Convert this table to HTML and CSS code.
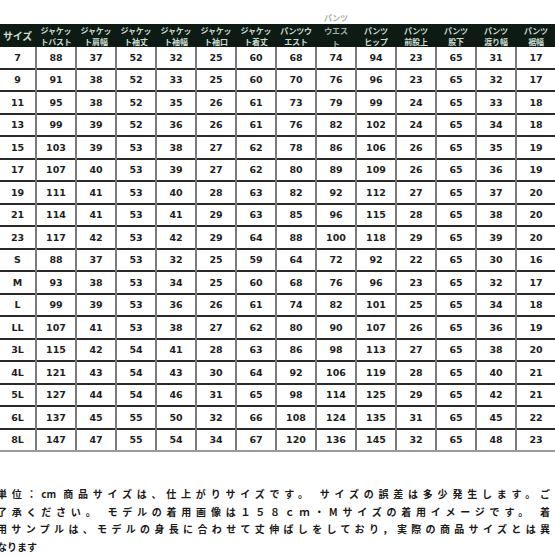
FILE: index.html
```html
<!DOCTYPE html>
<html lang="ja">
<head>
<meta charset="utf-8">
<link rel="stylesheet" href="styles.css">
</head>
<body>
<div class="page">
  <table class="size-table">
    <colgroup>
      <col class="c-first"><col><col><col><col><col><col><col><col><col><col><col><col><col>
    </colgroup>
    <thead>
      <tr>
        <th class="single">サイズ</th>
        <th>ジャケッ<br>トバスト</th>
        <th>ジャケッ<br>ト肩幅</th>
        <th>ジャケッ<br>ト袖丈</th>
        <th>ジャケッ<br>ト袖幅</th>
        <th>ジャケッ<br>ト袖口</th>
        <th>ジャケッ<br>ト着丈</th>
        <th>パンツウ<br>エスト</th>
        <th class="triple"><span class="tri">パンツ<br>ウエス<br>ト</span></th>
        <th>パンツ<br>ヒップ</th>
        <th>パンツ<br>前股上</th>
        <th>パンツ<br>股下</th>
        <th>パンツ<br>渡り幅</th>
        <th>パンツ<br>裾幅</th>
      </tr>
    </thead>
    <tbody>
      <tr><td>7</td><td>88</td><td>37</td><td>52</td><td>32</td><td>25</td><td>60</td><td>68</td><td>74</td><td>94</td><td>23</td><td>65</td><td>31</td><td>17</td></tr>
      <tr><td>9</td><td>91</td><td>38</td><td>52</td><td>33</td><td>25</td><td>60</td><td>70</td><td>76</td><td>96</td><td>23</td><td>65</td><td>32</td><td>17</td></tr>
      <tr><td>11</td><td>95</td><td>38</td><td>52</td><td>35</td><td>26</td><td>61</td><td>73</td><td>79</td><td>99</td><td>24</td><td>65</td><td>33</td><td>18</td></tr>
      <tr><td>13</td><td>99</td><td>39</td><td>52</td><td>36</td><td>26</td><td>61</td><td>76</td><td>82</td><td>102</td><td>24</td><td>65</td><td>34</td><td>18</td></tr>
      <tr><td>15</td><td>103</td><td>39</td><td>53</td><td>38</td><td>27</td><td>62</td><td>78</td><td>86</td><td>106</td><td>26</td><td>65</td><td>35</td><td>19</td></tr>
      <tr><td>17</td><td>107</td><td>40</td><td>53</td><td>39</td><td>27</td><td>62</td><td>80</td><td>89</td><td>109</td><td>26</td><td>65</td><td>36</td><td>19</td></tr>
      <tr><td>19</td><td>111</td><td>41</td><td>53</td><td>40</td><td>28</td><td>63</td><td>82</td><td>92</td><td>112</td><td>27</td><td>65</td><td>37</td><td>20</td></tr>
      <tr><td>21</td><td>114</td><td>41</td><td>53</td><td>41</td><td>29</td><td>63</td><td>85</td><td>96</td><td>115</td><td>28</td><td>65</td><td>38</td><td>20</td></tr>
      <tr><td>23</td><td>117</td><td>42</td><td>53</td><td>42</td><td>29</td><td>64</td><td>88</td><td>100</td><td>118</td><td>29</td><td>65</td><td>39</td><td>20</td></tr>
      <tr><td>S</td><td>88</td><td>37</td><td>53</td><td>32</td><td>25</td><td>59</td><td>64</td><td>72</td><td>92</td><td>22</td><td>65</td><td>30</td><td>16</td></tr>
      <tr><td>M</td><td>93</td><td>38</td><td>53</td><td>34</td><td>25</td><td>60</td><td>68</td><td>76</td><td>96</td><td>23</td><td>65</td><td>32</td><td>17</td></tr>
      <tr><td>L</td><td>99</td><td>39</td><td>53</td><td>36</td><td>26</td><td>61</td><td>74</td><td>82</td><td>101</td><td>25</td><td>65</td><td>34</td><td>18</td></tr>
      <tr><td>LL</td><td>107</td><td>41</td><td>53</td><td>38</td><td>27</td><td>62</td><td>80</td><td>90</td><td>107</td><td>26</td><td>65</td><td>36</td><td>19</td></tr>
      <tr><td>3L</td><td>115</td><td>42</td><td>54</td><td>41</td><td>28</td><td>63</td><td>86</td><td>98</td><td>113</td><td>27</td><td>65</td><td>38</td><td>20</td></tr>
      <tr><td>4L</td><td>121</td><td>43</td><td>54</td><td>43</td><td>30</td><td>64</td><td>92</td><td>106</td><td>119</td><td>28</td><td>65</td><td>40</td><td>21</td></tr>
      <tr><td>5L</td><td>127</td><td>44</td><td>54</td><td>46</td><td>31</td><td>65</td><td>98</td><td>114</td><td>125</td><td>29</td><td>65</td><td>42</td><td>21</td></tr>
      <tr><td>6L</td><td>137</td><td>45</td><td>55</td><td>50</td><td>32</td><td>66</td><td>108</td><td>124</td><td>135</td><td>31</td><td>65</td><td>45</td><td>22</td></tr>
      <tr><td>8L</td><td>147</td><td>47</td><td>55</td><td>54</td><td>34</td><td>67</td><td>120</td><td>136</td><td>145</td><td>32</td><td>65</td><td>48</td><td>23</td></tr>
    </tbody>
  </table>
  <div class="note">
    <div class="line just">単位：cm 商品サイズは、仕上がりサイズです。 サイズの誤差は多少発生します。ご</div>
    <div class="line just">了承ください。 モデルの着用画像は１５８ｃｍ・Mサイズの着用イメージです。 着</div>
    <div class="line just">用サンプルは、モデルの身長に合わせて丈伸ばしをしており，実際の商品サイズとは異</div>
    <div class="line">なります</div>
  </div>
</div>
</body>
</html>
```

FILE: styles.css
```css
html, body {
  margin: 0;
  padding: 0;
  background: #ffffff;
  overflow: hidden;
}
.page {
  width: 555px;
  height: 555px;
  overflow: hidden;
  padding-top: 24px;
  box-sizing: border-box;
}
.size-table {
  width: 556px;
  table-layout: fixed;
  border-collapse: collapse;
  font-family: "DejaVu Sans", "Noto Sans CJK JP", sans-serif;
}
.size-table col { width: 40px; }
.size-table col.c-first { width: 36px; }
.size-table th {
  background: #0e1a14;
  color: #c9dccf;
  font-family: "Noto Sans CJK JP", sans-serif;
  font-weight: 700;
  font-size: 8px;
  line-height: 11px;
  height: 23px;
  padding: 0;
  text-align: center;
  vertical-align: middle;
  white-space: nowrap;
  overflow: visible;
  border: none;
  letter-spacing: -0.2px;
}
.size-table th.single {
  font-size: 10px;
  text-align: left;
  padding-left: 3px;
}
.size-table th.triple {
  position: relative;
}
.tri {
  position: absolute;
  left: 0;
  right: 0;
  top: -13px;
  line-height: 13px;
  height: 36px;
  overflow: hidden;
  color: #9fb0a5;
}
.size-table td {
  height: 20.5px;
  padding: 0;
  text-align: center;
  vertical-align: middle;
  font-size: 9.5px;
  font-weight: 700;
  color: #1e1e1e;
  border-top: 2px solid #2a2a2a;
  border-left: 2px solid #7a7a7a;
  border-right: 2px solid #7a7a7a;
}
.size-table tbody tr:first-child td { border-top: none; }
.size-table tbody tr:last-child td { border-bottom: 2px solid #9a9a9a; }
.size-table td:first-child {
  border-left: none;
  text-align: center;
}
.note {
  margin-top: 33px;
  margin-left: -3px;
  width: 553px;
  font-family: "Noto Sans CJK JP", sans-serif;
  font-weight: 700;
  font-size: 10px;
  line-height: 17.5px;
  color: #1a1a1a;
}
.line.just {
  text-align: justify;
  text-align-last: justify;
}
```
